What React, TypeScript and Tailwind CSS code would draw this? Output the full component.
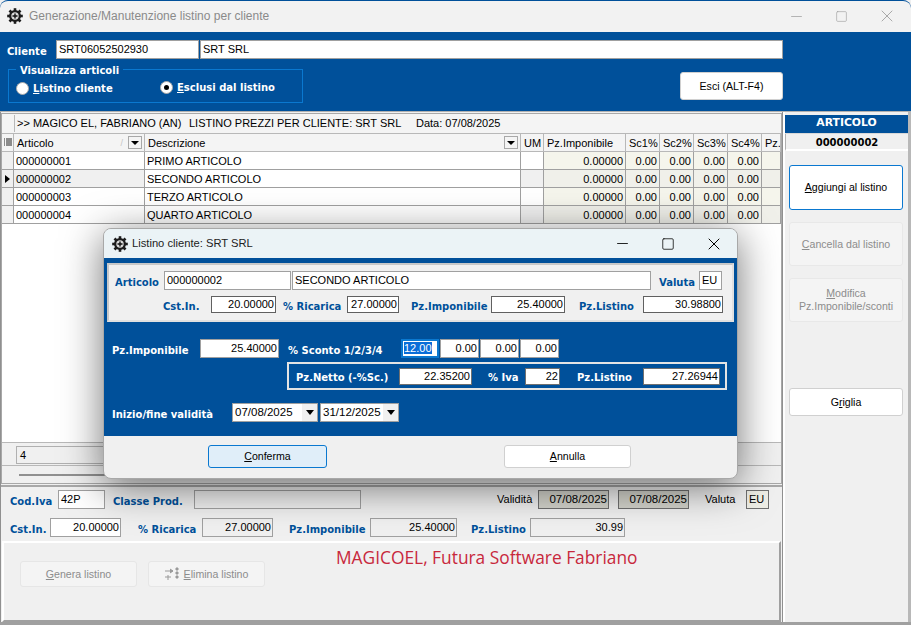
import { Minus, Square, X } from "lucide-react";
import type { ReactNode } from "react";

const sans = "font-['Liberation_Sans',Arial,sans-serif]";

// small gear with a plus, used as window icon
function GearIcon() {
  return (
    <svg width="16" height="16" viewBox="0 0 16 16" className="shrink-0">
      <g fill="#1c1c1c">
        <circle cx="8" cy="8" r="6" />
        {[0, 45, 90, 135].map((a) => (
          <rect key={a} x="6.7" y="0.2" width="2.6" height="15.6" transform={`rotate(${a} 8 8)`} />
        ))}
      </g>
      <circle cx="8" cy="8" r="3.7" fill="#dcdcdc" />
      <path d="M8 5.5v5M5.5 8h5" stroke="#111" strokeWidth="1.4" />
    </svg>
  );
}

function Label({ children, className = "" }: { children: ReactNode; className?: string }) {
  return (
    <span className={`font-['DejaVu_Sans',sans-serif] font-bold text-[10px] leading-none whitespace-nowrap pt-[4px] ${className}`}>
      {children}
    </span>
  );
}

function Field({ children, className = "" }: { children?: ReactNode; className?: string }) {
  return (
    <div className={`h-[19px] shrink-0 border border-[#a0a0a0] bg-white pl-[2px] pr-[1px] text-[11px] leading-[16px] text-black whitespace-nowrap overflow-hidden ${className}`}>
      {children}
    </div>
  );
}

function Btn({ children, className = "" }: { children: ReactNode; className?: string }) {
  return (
    <div className={`flex items-center justify-center text-center rounded-[3px] border text-[10.6px] leading-[13px] shrink-0 ${className}`}>
      {children}
    </div>
  );
}

function DateSelect({ value, className }: { value: string; className: string }) {
  return (
    <div className={`h-[19px] border border-[#a0a0a0] bg-white flex items-center pl-[2px] text-[11.5px] text-black ${className}`}>
      <span className="flex-1">{value}</span>
      <span className="w-[15px] h-[17px] bg-[#f0f0f0] flex items-center justify-center">
        <span className="border-x-[4px] border-x-transparent border-t-[5px] border-t-black" />
      </span>
    </div>
  );
}

const rows = [
  ["000000001", "PRIMO ARTICOLO"],
  ["000000002", "SECONDO ARTICOLO"],
  ["000000003", "TERZO ARTICOLO"],
  ["000000004", "QUARTO ARTICOLO"],
];

const cols = "grid grid-cols-[12px_131px_376px_23px_82px_34px_34px_34px_34px_19px]";
const hcell = "border-r border-b border-[#b8b8b8] pl-[3px] leading-[18px] whitespace-nowrap overflow-hidden";
const cell = "h-[18px] border-r border-b border-[#a0a0a0] leading-[19px] px-[2px] whitespace-nowrap overflow-hidden";

function DropBtn() {
  return (
    <span className="w-[14px] h-[13px] border border-[#a8a8a8] bg-[#f4f4f4] flex items-center justify-center">
      <span className="border-x-[4px] border-x-transparent border-t-[4px] border-t-black" />
    </span>
  );
}

export default function App() {
  return (
    <div className={`relative w-[911px] h-[625px] overflow-hidden bg-[#f0f0f0] text-black ${sans}`}>
      {/* title bar */}
      <div className="h-8 border-t border-[#00509a] rounded-t-lg bg-[#f2f2f2] flex items-center pl-[7px] pb-[1px] text-[#8a8a8a]">
        <GearIcon />
        <span className="ml-[6px] text-[12px]">Generazione/Manutenzione listino per cliente</span>
        <div className="ml-auto flex items-center pr-[2px] text-[#9a9a9a]">
          <span className="w-[45px] flex justify-center"><Minus size={17} strokeWidth={1} /></span>
          <span className="w-[45px] flex justify-center"><Square size={13} strokeWidth={1.1} /></span>
          <span className="w-[45px] flex justify-center"><X size={20} strokeWidth={1} /></span>
        </div>
      </div>

      {/* blue header */}
      <div className="h-[79px] bg-[#00509a] relative">
        <div className="flex items-center pt-2 pl-[7px]">
          <Label className="text-white w-[49px] text-[10.5px]">Cliente</Label>
          <Field className="w-[143px]">SRT06052502930</Field>
          <Field className="w-[583px] ml-[1px]">SRT SRL</Field>
        </div>
        <div className="flex mt-[5px] pl-2">
          <fieldset className="w-[295px] h-[40px] border border-[#0a78d0] -mt-[1px] flex items-start">
            <legend className="ml-[7px] px-[4px] leading-[12px]">
              <Label className="text-white text-[10.5px] !pt-0">Visualizza articoli</Label>
            </legend>
            <div className="flex items-center mt-[6px] ml-[7px] w-[144px]">
              <span className="w-[13px] h-[13px] rounded-full bg-white border border-[#aaa]" />
              <Label className="text-white ml-[4px] text-[10.5px] !pt-0"><u>L</u>istino cliente</Label>
            </div>
            <div className="flex items-center mt-[5px]">
              <span className="w-[13px] h-[13px] rounded-full bg-white border border-[#aaa] flex items-center justify-center">
                <span className="w-[5px] h-[5px] rounded-full bg-black" />
              </span>
              <Label className="text-white ml-[4px] text-[10.5px] !pt-0"><u>E</u>sclusi dal listino</Label>
            </div>
          </fieldset>
          <Btn className="w-[103px] h-[28px] ml-[377px] mt-[8px] bg-white border-[#d0d0d0]">Esci (ALT-F4)</Btn>
        </div>
      </div>

      {/* body */}
      <div className="flex h-[514px] border-t border-[#b0b0b0] border-b-[3px] border-b-[#a0a0a0]">
        <div className="w-[783px] shrink-0 flex flex-col border-l border-r border-[#909090]">
          {/* grid panel */}
          <div className="h-[371px] mt-[1px] border border-[#a8a8a8] flex flex-col text-[11px] bg-[#f0f0f0] relative">
            <div className="h-[20px] bg-[#f4f4f4] border-b border-[#b8b8b8] flex items-center pl-[12px] whitespace-nowrap">
              <span className="border-l border-[#b8b8b8] pl-[2px] w-[175px]">{">> MAGICO EL, FABRIANO (AN)"}</span>
              <span className="w-[227px]">LISTINO PREZZI PER CLIENTE: SRT SRL</span>
              <span>Data: 07/08/2025</span>
            </div>
            <div className={`${cols} h-[18px] bg-[#f4f4f4]`}>
              <div className={`${hcell} !pl-[2px] flex items-center`}>
                <svg width="8" height="9" viewBox="0 0 8 9"><path d="M0 1h1M0 3h1M0 5h1M0 7h1M2 1h6M2 3h6M2 5h6M2 7h6" stroke="#222" /></svg>
              </div>
              <div className={`${hcell} flex items-center justify-between pr-[2px]`}>
                Articolo
                <span className="flex items-center gap-[5px]">
                  <span className="text-[9px] text-[#c4c4c4]">/</span>
                  <DropBtn />
                </span>
              </div>
              <div className={`${hcell} flex items-center justify-between pr-[2px]`}>
                Descrizione
                <DropBtn />
              </div>
              <div className={hcell}>UM</div>
              <div className={hcell}>Pz.Imponibile</div>
              <div className={hcell}>Sc1%</div>
              <div className={hcell}>Sc2%</div>
              <div className={hcell}>Sc3%</div>
              <div className={hcell}>Sc4%</div>
              <div className={hcell}>Pz.</div>
            </div>
            {rows.map((r, i) => {
              const cur = i === 1;
              const tint = i % 2 === 1 ? "bg-[#f0f0ea]" : "bg-[#f5f5ec]";
              return (
                <div key={r[0]} className={cols}>
                  <div className={`${cell} bg-[#f0f0f0] !px-0 flex items-center justify-center`}>
                    {cur && <span className="border-y-[4px] border-y-transparent border-l-[5px] border-l-black" />}
                  </div>
                  <div className={`${cell} ${cur ? "bg-[#f0f0f0]" : "bg-white"}`}>{r[0]}</div>
                  <div className={`${cell} bg-white`}>{r[1]}</div>
                  <div className={`${cell} ${cur || i === 3 ? "bg-[#f0f0f0]" : "bg-white"}`} />
                  <div className={`${cell} ${tint} text-right`}>0.00000</div>
                  <div className={`${cell} ${tint} text-right`}>0.00</div>
                  <div className={`${cell} ${tint} text-right`}>0.00</div>
                  <div className={`${cell} ${tint} text-right`}>0.00</div>
                  <div className={`${cell} ${tint} text-right`}>0.00</div>
                  <div className={`${cell} ${tint}`} />
                </div>
              );
            })}
            <div className="flex-1 bg-white" />
            <div className="h-[24px] border-y border-[#b8b8b8] pl-[14px] flex items-center">
              <div className="w-[100px] h-[18px] mt-[1px] border border-[#b0b0b0] pl-[3px] leading-[16px]">4</div>
            </div>
            <div className="h-[17px] flex items-center pl-[17px]">
              <div className="w-[600px] h-[2px] bg-[#909090]" />
            </div>
          </div>

          {/* article detail */}
          <div className="h-[56px] border-t-2 border-[#a8a8a8] mt-[1px] pl-[9px] pt-[3px] flex flex-col gap-[9px]">
            <div className="flex items-center">
              <Label className="text-[#00509a] w-[48px]">Cod.Iva</Label>
              <Field className="w-[47px]">42P</Field>
              <Label className="text-[#00509a] ml-[8px] w-[81px]">Classe Prod.</Label>
              <div className="w-[167px] h-[19px] border border-[#a0a0a0]" />
              <span className="ml-[136px] text-[11px] w-[41px]">Validità</span>
              <Field className="w-[71px] !bg-[#d4d4cc] !border-[#707070] text-right !text-[11.5px]">07/08/2025</Field>
              <Field className="w-[71px] ml-[9px] !bg-[#d4d4cc] !border-[#707070] text-right !text-[11.5px]">07/08/2025</Field>
              <span className="ml-[16px] text-[11px] w-[41px]">Valuta</span>
              <Field className="w-[23px] !bg-[#eeeee6] !border-[#707070]">EU</Field>
            </div>
            <div className="flex items-center">
              <Label className="text-[#00509a] w-[40px]">Cst.In.</Label>
              <Field className="w-[71px] text-right">20.00000</Field>
              <Label className="text-[#00509a] ml-[17px] w-[64px]">% Ricarica</Label>
              <Field className="w-[71px] !bg-[#f0f0f0] text-right">27.00000</Field>
              <Label className="text-[#00509a] ml-[16px] w-[81px]">Pz.Imponibile</Label>
              <Field className="w-[87px] !bg-[#f0f0f0] text-right">25.40000</Field>
              <Label className="text-[#00509a] ml-[14px] w-[59px]">Pz.Listino</Label>
              <Field className="w-[95px] !bg-[#f0f0f0] text-right">30.99</Field>
            </div>
          </div>

          {/* lower panel */}
          <div className="flex-1 border-2 border-[#a0a0a0] border-t-white border-l-white ml-[1px] mr-[1px] pl-[16px] relative">
            <div className="absolute left-[332px] top-[2px] text-[17.35px] leading-[24px] text-[#c8283c] font-['Open_Sans',sans-serif] whitespace-nowrap">
              MAGICOEL, Futura Software Fabriano
            </div>
            <div className="flex gap-[11px] mt-[18px]">
              <Btn className="w-[117px] h-[26px] bg-[#f4f4f4] border-[#e6e6e6] text-[#8c8c8c]"><span><u>G</u>enera listino</span></Btn>
              <Btn className="w-[117px] h-[26px] bg-[#f4f4f4] border-[#e6e6e6] text-[#8c8c8c]">
                <svg width="15" height="14" viewBox="0 0 15 14" className="mr-[4px]">
                  <path d="M0 4h8M5 2l3 2-3 2M0 10h6M3 8v5M11 1h2v2h-2zM11 5h2v2h-2zM11 9h2v2h-2z" stroke="#9a9a9a" fill="#9a9a9a" strokeWidth="1" />
                </svg>
                <span><u>E</u>limina listino</span>
              </Btn>
            </div>
          </div>
        </div>

        {/* right column */}
        <div className="flex-1 border-l-2 border-l-white border-r-[3px] border-r-[#b8b8b8] pt-[3px] flex flex-col">
          <div className="h-[19px] bg-[#00509a] text-white text-center font-['DejaVu_Sans',sans-serif] font-bold text-[10.8px] leading-[15px] border-b border-[#d8d8d8]">ARTICOLO</div>
          <div className="h-[17px] border-l border-[#b0b0b0] border-b-2 border-b-white text-center font-['DejaVu_Sans',sans-serif] font-bold text-[10px] leading-[17px]">000000002</div>
          <div className="px-[4px] flex flex-col">
            <Btn className="w-[114px] h-[45px] mt-[14px] bg-white border-[#0a78d0]"><span><u>A</u>ggiungi al listino</span></Btn>
            <Btn className="w-[114px] h-[44px] mt-[12px] bg-[#f4f4f4] border-[#e8e8e8] text-[#8c8c8c]"><span><u>C</u>ancella dal listino</span></Btn>
            <Btn className="w-[114px] h-[44px] mt-[12px] bg-[#f4f4f4] border-[#e8e8e8] text-[#8c8c8c]"><span><u>M</u>odifica<br />Pz.Imponibile/sconti</span></Btn>
            <Btn className="w-[114px] h-[28px] mt-[66px] bg-white border-[#d0d0d0]"><span>G<u>r</u>iglia</span></Btn>
          </div>
        </div>
      </div>

      {/* dialog */}
      <div className="absolute left-[103px] top-[228px] w-[635px] h-[251px] rounded-lg border border-[#a8a8a8] bg-[#f0f0f0] shadow-[0_8px_40px_rgba(0,0,0,0.55)] overflow-hidden flex flex-col">
        <div className="h-[29px] bg-[#ebf3f6] flex items-center pl-[8px] text-[#222]">
          <GearIcon />
          <span className="ml-[4px] text-[11.2px]">Listino cliente: SRT SRL</span>
          <div className="ml-auto flex items-center text-black">
            <span className="w-[46px] flex justify-center"><Minus size={17} strokeWidth={1.2} /></span>
            <span className="w-[46px] flex justify-center"><Square size={14} strokeWidth={1.3} /></span>
            <span className="w-[46px] flex justify-center"><X size={20} strokeWidth={1.2} /></span>
          </div>
        </div>

        <div className="h-[178px] bg-[#00509a] pt-[5px] pl-[3px]">
          <div className="w-[627px] h-[59px] border-2 border-[#c8c8c8] border-r-[#e0e0e0] border-b-[#e0e0e0] bg-[#f0f0f0] pl-[6px] pt-[6px]">
            <div className="flex items-center">
              <Label className="text-[#00509a] w-[49px] text-[10.5px]">Articolo</Label>
              <Field className="w-[127px]">000000002</Field>
              <Field className="w-[359px] ml-[1px]">SECONDO ARTICOLO</Field>
              <Label className="text-[#00509a] ml-[8px] w-[40px] text-[10.5px]">Valuta</Label>
              <Field className="w-[23px]">EU</Field>
            </div>
            <div className="flex items-center mt-[6px] ml-[48px]">
              <Label className="text-[#00509a] w-[48px]">Cst.In.</Label>
              <Field className="w-[65px] !h-[17px] !border-[#606060] text-right !leading-[15px]">20.00000</Field>
              <Label className="text-[#00509a] ml-[7px] w-[64px]">% Ricarica</Label>
              <Field className="w-[52px] !h-[17px] !border-[#606060] text-right !leading-[15px]">27.00000</Field>
              <Label className="text-[#00509a] ml-[12px] w-[80px]">Pz.Imponibile</Label>
              <Field className="w-[74px] !h-[17px] !border-[#606060] text-right !leading-[15px]">25.40000</Field>
              <Label className="text-[#00509a] ml-[14px] w-[64px]">Pz.Listino</Label>
              <Field className="w-[80px] !h-[17px] !border-[#606060] text-right !leading-[15px]">30.98800</Field>
            </div>
          </div>

          <div className="flex items-center mt-[17px] ml-[5px]">
            <Label className="text-white w-[88px]">Pz.Imponibile</Label>
            <Field className="w-[79px] text-right">25.40000</Field>
            <Label className="text-white ml-[9px] w-[113px]">% Sconto 1/2/3/4</Label>
            <Field className="w-[38px] !border-[#0a78d0] !border-2 !px-[1px] !leading-[15px]"><span className="bg-[#0a6ed8] text-white">12.00</span></Field>
            <Field className="w-[39px] ml-[1px] text-right">0.00</Field>
            <Field className="w-[39px] ml-[1px] text-right">0.00</Field>
            <Field className="w-[39px] ml-[1px] text-right">0.00</Field>
          </div>

          <div className="w-[440px] h-[28px] ml-[180px] mt-[4px] border-2 border-[#e4e4e4] flex items-center pl-[7px]">
            <Label className="text-white w-[103px]">Pz.Netto (-%Sc.)</Label>
            <Field className="w-[73px] !h-[17px] !border-[#707070] text-right !leading-[15px]">22.35200</Field>
            <Label className="text-white ml-[16px] w-[37px]">% Iva</Label>
            <Field className="w-[35px] !h-[17px] !border-[#707070] text-right !leading-[15px]">22</Field>
            <Label className="text-white ml-[17px] w-[66px]">Pz.Listino</Label>
            <Field className="w-[77px] !h-[17px] !border-[#707070] text-right !leading-[15px]">27.26944</Field>
          </div>

          <div className="flex items-center mt-[13px] ml-[5px]">
            <Label className="text-white w-[120px]">Inizio/fine validità</Label>
            <DateSelect value="07/08/2025" className="w-[86px]" />
            <DateSelect value="31/12/2025" className="w-[79px] ml-[2px]" />
          </div>
        </div>

        <div className="flex-1 flex items-start pt-[9px] pl-[104px]">
          <Btn className="w-[119px] h-[23px] bg-[#e0eef9] border-[#0a78d0]"><span><u>C</u>onferma</span></Btn>
          <Btn className="w-[127px] h-[23px] ml-[177px] bg-white border-[#d0d0d0]"><span><u>A</u>nnulla</span></Btn>
        </div>
      </div>
    </div>
  );
}
